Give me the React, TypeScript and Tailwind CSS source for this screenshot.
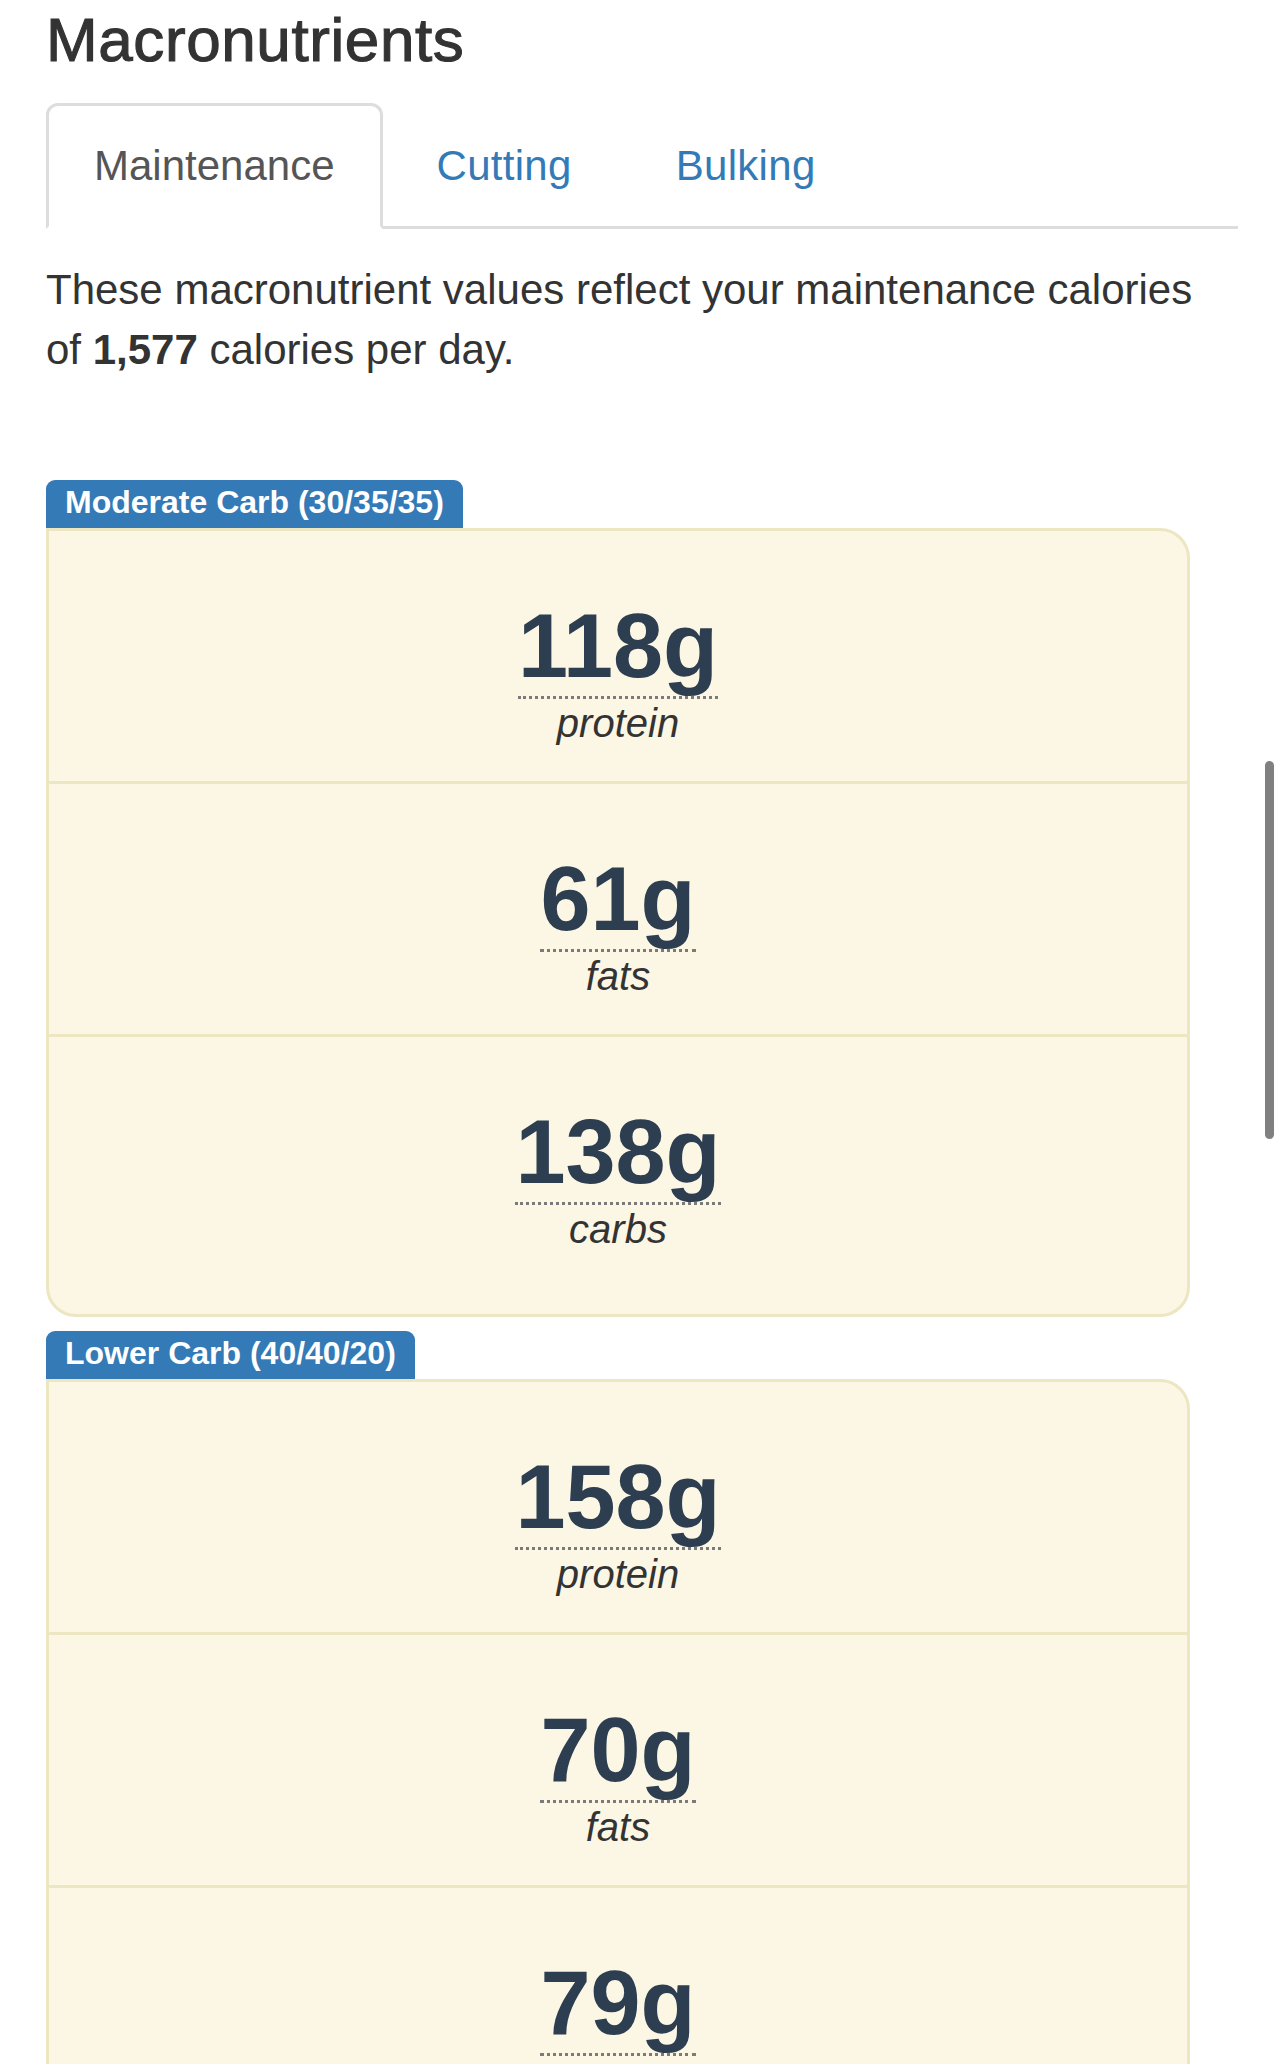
import React from "react";

type Row = { value: string; label: string };
type Plan = { title: string; rows: Row[] };

const plans: Plan[] = [
  {
    title: "Moderate Carb (30/35/35)",
    rows: [
      { value: "118g", label: "protein" },
      { value: "61g", label: "fats" },
      { value: "138g", label: "carbs" },
    ],
  },
  {
    title: "Lower Carb (40/40/20)",
    rows: [
      { value: "158g", label: "protein" },
      { value: "70g", label: "fats" },
      { value: "79g", label: "carbs" },
    ],
  },
];

function MacroCard({ plan, first }: { plan: Plan; first: boolean }) {
  return (
    <div className={first ? "mt-[100px]" : "mt-[14px]"}>
      <div className="flex">
        <span className="rounded-t-[9px] bg-[#337ab7] px-[19px] pt-[6px] pb-[10px] text-[32px] font-bold leading-none text-white">
          {plan.title}
        </span>
      </div>
      <div className="w-[1144px] overflow-hidden rounded-tr-[30px] rounded-b-[30px] border-[3px] border-[#ede6c2] bg-[#fcf6e4] pb-[27px]">
        {plan.rows.map((r, i) => (
          <div
            key={r.label}
            className={
              "flex flex-col items-center pt-[70px] pb-[34px] " +
              (i > 0 ? "border-t-[3px] border-[#ede6c2]" : "")
            }
          >
            <span className="border-b-[3px] border-dotted border-[#7a7a7a] pb-[5px] text-[90px] font-bold leading-[90px] text-[#2c3e50]">
              {r.value}
            </span>
            <span className="text-[40px] italic leading-[48px] text-[#333333]">
              {r.label}
            </span>
          </div>
        ))}
      </div>
    </div>
  );
}

export default function App() {
  return (
    <div
      className="relative h-[2064px] w-[1284px] overflow-hidden bg-white text-[#333333]"
      style={{ fontFamily: '"Liberation Sans", Arial, sans-serif' }}
    >
      <div className="pl-[46px] pr-[46px] pt-[7px]">
        <h2 className="text-[62px] font-normal leading-[66px] tracking-[0.6px] text-[#333333] [-webkit-text-stroke:1.1px_#333333]">
          Macronutrients
        </h2>
        <ul className="mt-[30px] flex border-b-[3px] border-[#dddddd]">
          <li className="-mb-[3px] mr-[6px]">
            <span className="block rounded-t-[12px] border-[3px] border-[#dddddd] border-b-transparent bg-white px-[45px] py-[30px] text-[42px] leading-[60px] text-[#555555]">
              Maintenance
            </span>
          </li>
          <li className="-mb-[3px] mr-[6px]">
            <span className="block rounded-t-[12px] border-[3px] border-transparent px-[45px] py-[30px] text-[42px] leading-[60px] tracking-[0.3px] text-[#337ab7]">
              Cutting
            </span>
          </li>
          <li className="-mb-[3px] mr-[6px]">
            <span className="block rounded-t-[12px] border-[3px] border-transparent px-[47px] py-[30px] text-[42px] leading-[60px] tracking-[0.3px] text-[#337ab7]">
              Bulking
            </span>
          </li>
        </ul>
        <p className="mt-[31px] text-[42px] leading-[60px]">
          These macronutrient values reflect your maintenance calories
          <br />
          of <b>1,577</b> calories per day.
        </p>
        {plans.map((p, i) => (
          <MacroCard key={p.title} plan={p} first={i === 0} />
        ))}
      </div>
      <div className="absolute left-[1265px] top-[761px] h-[378px] w-[9px] rounded-full bg-[#808080]" />
    </div>
  );
}
